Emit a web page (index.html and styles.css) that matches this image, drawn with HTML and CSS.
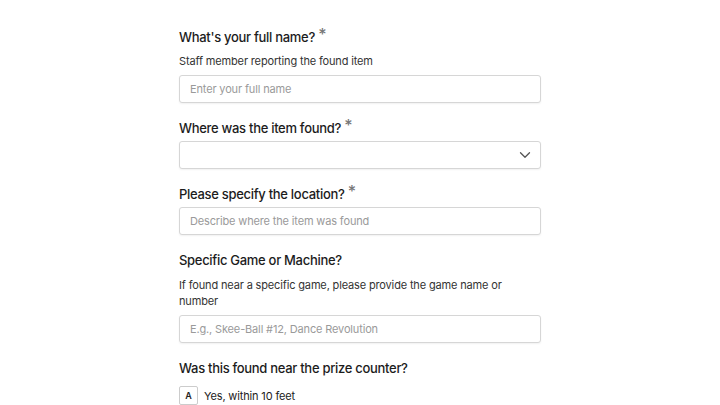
FILE: index.html
```html
<!DOCTYPE html>
<html lang="en">
<head>
    <meta charset="UTF-8">
    <meta name="viewport" content="width=device-width, initial-scale=1.0">
    <title>Found Item Report</title>
    <link rel="stylesheet" href="styles.css">
</head>
<body>
    <form class="form">
        <div class="field">
            <label class="label">What's your full name? <span class="req">*</span></label>
            <p class="desc">Staff member reporting the found item</p>
            <input type="text" class="input" placeholder="Enter your full name">
        </div>

        <div class="field">
            <label class="label">Where was the item found? <span class="req">*</span></label>
            <div class="select">
                <svg class="chevron" width="12" height="8" viewBox="0 0 12 8">
                    <path d="M1.5 1.75 L6 6.25 L10.5 1.75" fill="none" stroke="#555" stroke-width="1.3" stroke-linecap="round" stroke-linejoin="round"/>
                </svg>
            </div>
        </div>

        <div class="field">
            <label class="label">Please specify the location? <span class="req">*</span></label>
            <input type="text" class="input" placeholder="Describe where the item was found">
        </div>

        <div class="field">
            <label class="label">Specific Game or Machine?</label>
            <p class="desc desc-long">If found near a specific game, please provide the game name or number</p>
            <input type="text" class="input" placeholder="E.g., Skee-Ball #12, Dance Revolution">
        </div>

        <div class="field last">
            <label class="label">Was this found near the prize counter?</label>
            <div class="choice">
                <span class="key">A</span>
                <span>Yes, within 10 feet</span>
            </div>
        </div>
    </form>
</body>
</html>
```

FILE: styles.css
```css
body {
    margin: 0;
    background: #fff;
    font-family: Inter, "Noto Sans", sans-serif;
    color: #222;
}

.form {
    width: 362px;
    margin: 0 auto;
    padding-top: 27px;
}

.field {
    display: flex;
    flex-direction: column;
    margin-bottom: 15px;
}

.label {
    font-size: 13px;
    font-weight: 500;
    letter-spacing: -0.3px;
    line-height: 20px;
    color: #1c1c1c;
    margin-bottom: 3px;
}

.req {
    color: #777;
    font-size: 16px;
    line-height: 0;
    position: relative;
    top: -2px;
}

.desc {
    margin: 3px 0 6px;
    font-size: 11px;
    letter-spacing: -0.15px;
    line-height: 16px;
    color: #333;
}

.desc-long {
    margin-top: 4px;
}

.input, .select {
    box-sizing: border-box;
    height: 28px;
    width: 100%;
    border: 1px solid #d6d6d6;
    border-radius: 3px;
    box-shadow: 0 1px 2px rgba(0, 0, 0, 0.06);
    background: #fff;
}

.input {
    padding: 0 10px;
    font-family: inherit;
    font-size: 11px;
    letter-spacing: -0.15px;
    color: #222;
}

.input::placeholder {
    color: #9a9a9a;
}

.select {
    display: flex;
    align-items: center;
    justify-content: flex-end;
    padding-right: 9px;
}

.last {
    margin-top: 1px;
}

.choice {
    display: flex;
    align-items: center;
    gap: 6px;
    margin-top: 5px;
    font-size: 11px;
    letter-spacing: -0.15px;
    color: #222;
}

.key {
    box-sizing: border-box;
    width: 19px;
    height: 19px;
    display: flex;
    align-items: center;
    justify-content: center;
    border: 1px solid #ccc;
    border-radius: 2px;
    font-size: 9px;
    font-weight: 600;
}
```
